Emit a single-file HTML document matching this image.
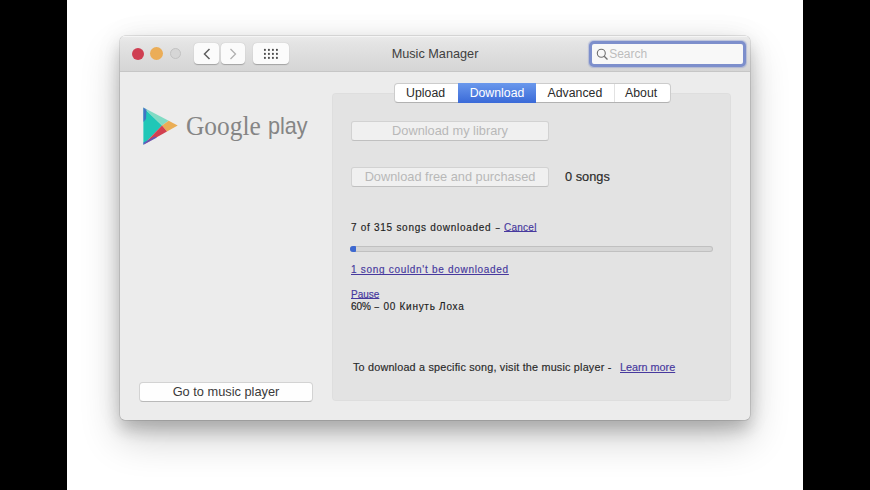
<!DOCTYPE html>
<html><head><meta charset="utf-8">
<style>
*{margin:0;padding:0;box-sizing:border-box}
html,body{width:870px;height:490px;overflow:hidden;background:#fff;font-family:"Liberation Sans",sans-serif}
.bl{position:absolute;top:0;height:490px;background:#000}
#win{position:absolute;left:120px;top:36px;width:630px;height:384px;border-radius:5px;background:#ececec;
 box-shadow:0 0 0 0.5px rgba(0,0,0,0.2),0 10px 16px rgba(0,0,0,0.18),0 18px 40px rgba(0,0,0,0.2),0 0 30px rgba(0,0,0,0.06);overflow:hidden}
#tb{position:absolute;left:0;top:0;width:630px;height:36px;background:linear-gradient(#ebebeb,#e4e4e4 20%,#d5d5d5);border-bottom:1px solid #c6c6c6;box-shadow:inset 0 1px 0 rgba(255,255,255,0.5)}
.dot{position:absolute;border-radius:50%}
.nb{position:absolute;top:7px;height:21px;background:#fbfbfb;border-radius:4px;box-shadow:0 0.5px 1px rgba(0,0,0,0.25)}
#title{position:absolute;left:0;width:630px;top:11px;text-align:center;font-size:12.7px;color:#404040}
#search{position:absolute;left:469.2px;top:5.2px;width:156.6px;height:25.4px;border-radius:5px;border:3.6px solid #7d8fcc;background:#f8f8f8;box-shadow:0 0 1px 0.5px rgba(125,143,204,0.4)}
#search span{position:absolute;left:17px;top:3px;font-size:12px;color:#bdbdbd}
#panel{position:absolute;left:212.4px;top:56.5px;width:398.8px;height:308.3px;background:#e3e3e3;border-radius:4px;box-shadow:inset 0 0 0 1px rgba(0,0,0,0.02)}
#tabs{position:absolute;left:273.6px;top:47px;height:19.6px;width:277px;background:#fff;border-radius:4px;border:1px solid rgba(0,0,0,0.2);border-bottom-color:rgba(0,0,0,0.3)}
.tab{position:absolute;top:0;height:18px;font-size:12.3px;color:#2b2b2b;text-align:center;line-height:19.4px}
.btn{position:absolute;background:#f0f0f0;border-radius:3px;border:1px solid rgba(0,0,0,0.12);border-bottom-color:rgba(0,0,0,0.2);color:#b8b8b8;font-size:12.8px;text-align:center;line-height:17px}
.t{position:absolute;white-space:nowrap;color:#1e1e1e}
.sb{-webkit-text-stroke:0.16px currentColor}
.lk{color:#47399e;text-decoration:underline;text-decoration-skip-ink:none;text-underline-offset:1.5px}
</style></head><body>
<div class="bl" style="left:0;width:66.8px"></div>
<div class="bl" style="left:802.9px;width:67.1px"></div>
<div id="win">
 <div id="tb">
  <div class="dot" style="left:12px;top:12px;width:12px;height:12px;background:#cf3f52"></div>
  <div class="dot" style="left:30px;top:10.8px;width:13px;height:13px;background:#ebad57"></div>
  <div class="dot" style="left:50px;top:12px;width:11px;height:11px;background:#d6d6d6;border:1px solid #c2c2c2"></div>
  <div class="nb" style="left:73.5px;width:25px"></div>
  <div class="nb" style="left:100.5px;width:24.5px"></div>
  <div class="nb" style="left:133px;width:36px"></div>
  <svg style="position:absolute;left:82px;top:12px" width="10" height="12" viewBox="0 0 10 12"><path d="M7.5 1 L2.5 6 L7.5 11" fill="none" stroke="#5f5f5f" stroke-width="1.5"/></svg>
  <svg style="position:absolute;left:108px;top:12px" width="10" height="12" viewBox="0 0 10 12"><path d="M2.5 1 L7.5 6 L2.5 11" fill="none" stroke="#b0b0b0" stroke-width="1.3"/></svg>
  <svg style="position:absolute;left:142.6px;top:12.2px" width="16" height="12" viewBox="0 0 16 12"><g fill="#4a4a4a"><circle cx="1.9" cy="1.9" r="1.05"/><circle cx="5.9" cy="1.9" r="1.05"/><circle cx="9.9" cy="1.9" r="1.05"/><circle cx="13.9" cy="1.9" r="1.05"/><circle cx="1.9" cy="5.9" r="1.05"/><circle cx="5.9" cy="5.9" r="1.05"/><circle cx="9.9" cy="5.9" r="1.05"/><circle cx="13.9" cy="5.9" r="1.05"/><circle cx="1.9" cy="9.9" r="1.05"/><circle cx="5.9" cy="9.9" r="1.05"/><circle cx="9.9" cy="9.9" r="1.05"/><circle cx="13.9" cy="9.9" r="1.05"/></g></svg>
  <div id="title">Music Manager</div>
  <div id="search">
   <svg style="position:absolute;left:3.5px;top:3.8px" width="13" height="13" viewBox="0 0 13 13"><circle cx="5.3" cy="5.3" r="4" fill="none" stroke="#707070" stroke-width="1.1"/><path d="M8.2 8.2 L11.5 11.5" stroke="#707070" stroke-width="1.3"/></svg>
   <span>Search</span>
  </div>
 </div>
 <!-- logo -->
 <svg style="position:absolute;left:22px;top:70px" width="38" height="42" viewBox="0 0 38 42">
  <polygon points="1.4,1.4 1.4,38.8 20,19.5" fill="#20c7b7"/>
  <polygon points="1.4,1.4 26.7,14.75 20,19.5" fill="#80dbc4"/>
  <polygon points="20,19.5 26.7,14.75 35.7,19.5 25,25.5" fill="#eaad55"/>
  <polygon points="1.4,38.8 20,19.5 25,25.5" fill="#d2404f"/>
  <polygon points="1.4,1.4 4.5,3.5 4,13 1.4,16" fill="#4b58c8" opacity="0.75"/>
  <polygon points="1.4,38.8 15,31.5 13,30.5 1.4,36.5" fill="#4b58c8" opacity="0.8"/>
 </svg>
 <div class="t" style="left:66px;top:74.5px;font-family:'Liberation Serif',serif;font-size:27px;color:#858585;transform:scaleX(0.94);transform-origin:0 0">Google</div>
 <div class="t" style="left:148px;top:76.3px;font-size:24px;color:#858585;transform:scaleX(0.9);transform-origin:0 0">play</div>
 <div class="btn" style="left:19px;top:346px;width:174px;height:20px;background:#fefefe;color:#3a3a3a;line-height:18px;border-color:rgba(0,0,0,0.17);border-bottom-color:rgba(0,0,0,0.27);border-radius:4px">Go to music player</div>

 <div id="panel"></div>
 <div id="tabs">
  <div class="tab" style="left:-1px;width:64px">Upload</div>
  <div class="tab" style="left:63.2px;top:-1px;height:19.6px;line-height:21px;width:78.4px;background:linear-gradient(#6a98ec,#3a6ad8);color:#fff">Download</div>
  <div class="tab" style="left:141.6px;width:77.4px">Advanced</div>
  <div style="position:absolute;left:219px;top:0;width:1px;height:18px;background:#e2e2e2"></div>
  <div class="tab" style="left:218px;width:57px">About</div>
 </div>
 <div class="btn" style="left:231px;top:85px;width:198px;height:20px">Download my library</div>
 <div class="btn" style="left:231px;top:131px;width:198px;height:20px;line-height:18px">Download free and purchased</div>
 <div class="t sb" style="left:445px;top:133px;font-size:12.8px;color:#2a2a2a">0 songs</div>
 <div class="t sb" style="left:231px;top:185.5px;font-size:10px;letter-spacing:0.72px">7 of 315 songs downloaded</div>
 <div class="t sb" style="left:374.7px;top:185.5px;font-size:10px;color:#333;transform:scaleX(0.7);transform-origin:50% 50%">–</div>
 <div class="t sb lk" style="left:384px;top:185.5px;font-size:10px;letter-spacing:0.25px;text-underline-offset:0px">Cancel</div>
 <div style="position:absolute;left:229.8px;top:210px;width:363.2px;height:5.8px;border-radius:3px;background:#d6d6d6;border:1px solid rgba(0,0,0,0.1)"></div>
 <div style="position:absolute;left:229.8px;top:210px;width:6px;height:5.8px;border-radius:3px 1px 1px 3px;background:#3d68d0"></div>
 <div class="t lk sb" style="left:231px;top:227.6px;text-underline-offset:0.6px;font-size:10px;letter-spacing:0.7px">1 song couldn't be downloaded</div>
 <div class="t lk sb" style="left:231px;top:252.8px;text-underline-offset:0px;font-size:10px;letter-spacing:0px">Pause</div>
 <div class="t sb" style="left:231px;top:265.2px;font-size:10px;letter-spacing:0px">60%</div>
 <div class="t sb" style="left:254.2px;top:265.2px;font-size:10px;color:#333;transform:scaleX(0.8);transform-origin:50% 50%">–</div>
 <div class="t sb" style="left:263.5px;top:265.2px;font-size:10px;letter-spacing:0.72px">00 Кинуть Лоха</div>
 <div class="t sb" style="left:233px;top:325px;font-size:10.8px;letter-spacing:0.2px;color:#2a2a2a">To download a specific song, visit the music player -</div>
 <div class="t lk sb" style="left:500px;top:325px;text-underline-offset:0.5px;font-size:10.8px">Learn more</div>
</div>
</body></html>
